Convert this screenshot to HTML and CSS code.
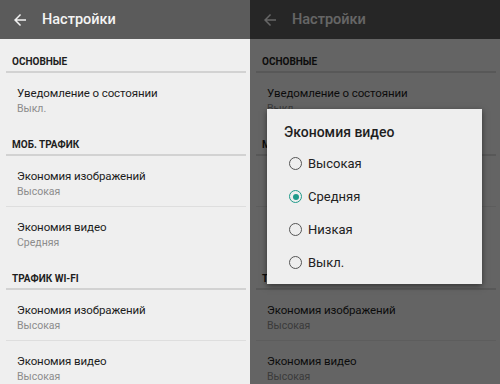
FILE: index.html
```html
<!DOCTYPE html>
<html>

<head>
  <title>Настройки</title>
  <meta name="viewport" content="width=device-width, initial-scale=1">
  <link rel="stylesheet" href="styles.css">
</head>

<body>
  <div class="screens">
    <!-- Экран настроек -->
    <div class="screen">
      <div class="toolbar">
        <svg class="back" viewBox="0 0 24 24"><path d="M20 11H7.83l5.59-5.59L12 4l-8 8 8 8 1.41-1.41L7.83 13H20v-2z"/></svg>
        <span class="toolbar-title">Настройки</span>
      </div>
      <div class="section-title">ОСНОВНЫЕ</div>
      <div class="item">
        <div class="item-title">Уведомление о состоянии</div>
        <div class="item-sub">Выкл.</div>
      </div>
      <div class="section-title">МОБ. ТРАФИК</div>
      <div class="item">
        <div class="item-title">Экономия изображений</div>
        <div class="item-sub">Высокая</div>
      </div>
      <div class="item">
        <div class="item-title">Экономия видео</div>
        <div class="item-sub">Средняя</div>
      </div>
      <div class="section-title">ТРАФИК WI-FI</div>
      <div class="item">
        <div class="item-title">Экономия изображений</div>
        <div class="item-sub">Высокая</div>
      </div>
      <div class="item">
        <div class="item-title">Экономия видео</div>
        <div class="item-sub">Высокая</div>
      </div>
    </div>

    <!-- Тот же экран с открытым диалогом -->
    <div class="screen">
      <div class="toolbar">
        <svg class="back" viewBox="0 0 24 24"><path d="M20 11H7.83l5.59-5.59L12 4l-8 8 8 8 1.41-1.41L7.83 13H20v-2z"/></svg>
        <span class="toolbar-title">Настройки</span>
      </div>
      <div class="section-title">ОСНОВНЫЕ</div>
      <div class="item">
        <div class="item-title">Уведомление о состоянии</div>
        <div class="item-sub">Выкл.</div>
      </div>
      <div class="section-title">МОБ. ТРАФИК</div>
      <div class="item">
        <div class="item-title">Экономия изображений</div>
        <div class="item-sub">Высокая</div>
      </div>
      <div class="item">
        <div class="item-title">Экономия видео</div>
        <div class="item-sub">Средняя</div>
      </div>
      <div class="section-title">ТРАФИК WI-FI</div>
      <div class="item">
        <div class="item-title">Экономия изображений</div>
        <div class="item-sub">Высокая</div>
      </div>
      <div class="item">
        <div class="item-title">Экономия видео</div>
        <div class="item-sub">Высокая</div>
      </div>

      <div class="scrim"></div>
      <div class="dialog">
        <div class="dialog-title">Экономия видео</div>
        <div class="option"><span class="radio"></span>Высокая</div>
        <div class="option"><span class="radio checked"></span>Средняя</div>
        <div class="option"><span class="radio"></span>Низкая</div>
        <div class="option"><span class="radio"></span>Выкл.</div>
      </div>
    </div>
  </div>
</body>

</html>
```

FILE: styles.css
```css
body {
  margin: 0;
  font-family: Roboto, "Noto Sans", sans-serif;
  background: #e2e2e2;
  overflow: hidden;
}

.screens {
  display: flex;
  width: 500px;
  height: 384px;
}

.screen {
  position: relative;
  width: 250px;
  height: 384px;
  background: #efefef;
  overflow: hidden;
}

/* ВЕРХНЯЯ ПАНЕЛЬ */
.toolbar {
  display: flex;
  align-items: center;
  height: 39px;
  background: #5b5b5b;
  margin-bottom: 2px;
}

.back {
  width: 18px;
  height: 18px;
  fill: #f2f2f2;
  margin-left: 11px;
}

.toolbar-title {
  margin-left: 13px;
  color: #f4f4f4;
  font-size: 14.5px;
  font-weight: 500;
}

/* СПИСОК */
.section-title {
  margin: 0 4px 0 6px;
  padding: 16px 0 4px 6px;
  height: 10px;
  line-height: 10px;
  font-size: 10px;
  font-weight: 700;
  color: #1e1e1e;
  border-bottom: 2px solid #d2d2d2;
}

.item {
  margin: 0 4px 0 6px;
  padding: 13px 0 0 11px;
  height: 37px;
  border-bottom: 1px solid #dedede;
}

.item:has(+ .section-title),
.item:last-of-type {
  border-bottom-color: transparent;
}

.item-title {
  font-size: 11.5px;
  letter-spacing: -0.1px;
  line-height: 15px;
  color: #1c1c1c;
}

.item-sub {
  font-size: 10.5px;
  line-height: 15px;
  color: #8c8c8c;
}

/* ДИАЛОГ */
.scrim {
  position: absolute;
  inset: 0;
  background: rgba(0, 0, 0, 0.58);
}

.dialog {
  position: absolute;
  left: 17px;
  top: 109px;
  width: 215px;
  height: 175px;
  box-sizing: border-box;
  padding: 15px 0 0 17px;
  background: #eeeeee;
  box-shadow: 0 2px 6px rgba(0, 0, 0, 0.5);
}

.dialog-title {
  font-size: 14px;
  line-height: 16px;
  font-weight: 500;
  color: #1e1e1e;
  margin-bottom: 7px;
}

.option {
  display: flex;
  align-items: center;
  height: 33px;
  font-size: 13px;
  color: #222;
}

.radio {
  box-sizing: border-box;
  width: 13px;
  height: 13px;
  border: 1.5px solid #555;
  border-radius: 50%;
  margin: 0 6px 0 5px;
  display: flex;
  align-items: center;
  justify-content: center;
}

.radio.checked {
  border-color: #1f9a8a;
}

.radio.checked::after {
  content: "";
  width: 6px;
  height: 6px;
  border-radius: 50%;
  background: #1f9a8a;
}
```
